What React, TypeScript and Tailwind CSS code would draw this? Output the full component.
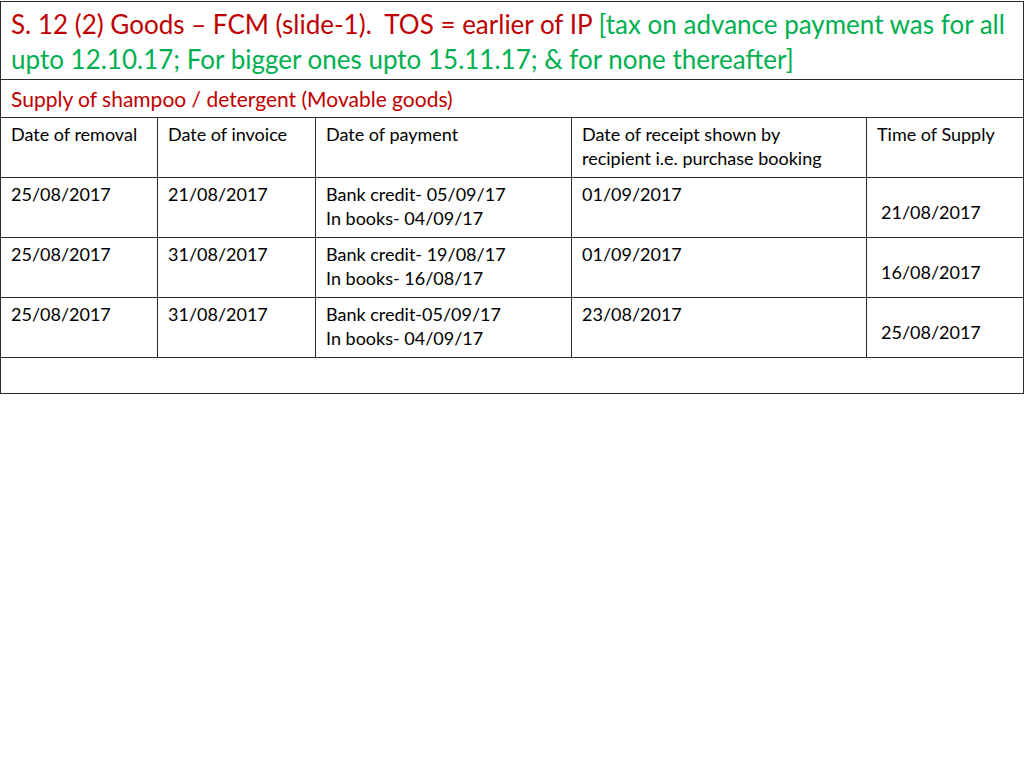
import React from "react";

const rows = [
  ["25/08/2017", "21/08/2017", ["Bank credit- 05/09/17", "In books- 04/09/17"], "01/09/2017", "21/08/2017"],
  ["25/08/2017", "31/08/2017", ["Bank credit- 19/08/17", "In books- 16/08/17"], "01/09/2017", "16/08/2017"],
  ["25/08/2017", "31/08/2017", ["Bank credit-05/09/17", "In books- 04/09/17"], "23/08/2017", "25/08/2017"],
] as const;

export default function App() {
  const cell = "border-[1.5px] border-[#2a2a2a] align-top pl-[10px] pt-[4px] text-[18px] leading-[24px] text-black";
  return (
    <div className="w-[1024px] h-[768px] bg-white" style={{ fontFamily: "Lato, 'Open Sans', sans-serif" }}>
      <table className="w-[1023px] border-collapse table-fixed mt-[1px]">
        <colgroup>
          <col className="w-[157px]" />
          <col className="w-[158px]" />
          <col className="w-[256px]" />
          <col className="w-[295px]" />
          <col className="w-[157px]" />
        </colgroup>
        <tbody>
          <tr className="h-[78px]">
            <td colSpan={5} className="border-[1.5px] border-[#2a2a2a] align-top pl-[10px] pt-[5px] text-[26px] leading-[35px] whitespace-nowrap">
              <span className="text-[#c00000]">S. 12 (2) Goods – FCM (slide-1).&nbsp; TOS = earlier of IP </span>
              <span className="text-[#00b050]">[tax on advance payment was for all<br />upto 12.10.17; For bigger ones upto 15.11.17; &amp; for none thereafter]</span>
            </td>
          </tr>
          <tr className="h-[38px]">
            <td colSpan={5} className="border-[1.5px] border-[#2a2a2a] align-middle pl-[10px] text-[21px] leading-[26px] text-[#c00000]">
              Supply of shampoo / detergent (Movable goods)
            </td>
          </tr>
          <tr className="h-[60px]">
            <td className={cell}>Date of removal</td>
            <td className={cell}>Date of invoice</td>
            <td className={cell}>Date of payment</td>
            <td className={cell}>Date of receipt shown by<br />recipient i.e. purchase booking</td>
            <td className={cell}>Time of Supply</td>
          </tr>
          {rows.map((r, i) => (
            <tr key={i} className="h-[60px]">
              <td className={cell}>{r[0]}</td>
              <td className={cell}>{r[1]}</td>
              <td className={cell}>{r[2][0]}<br />{r[2][1]}</td>
              <td className={cell}>{r[3]}</td>
              <td className="border-[1.5px] border-[#2a2a2a] align-top pl-[14px] pt-[22px] text-[18px] leading-[24px] text-black">{r[4]}</td>
            </tr>
          ))}
          <tr className="h-[36px]">
            <td colSpan={5} className="border-[1.5px] border-[#2a2a2a]"></td>
          </tr>
        </tbody>
      </table>
    </div>
  );
}
